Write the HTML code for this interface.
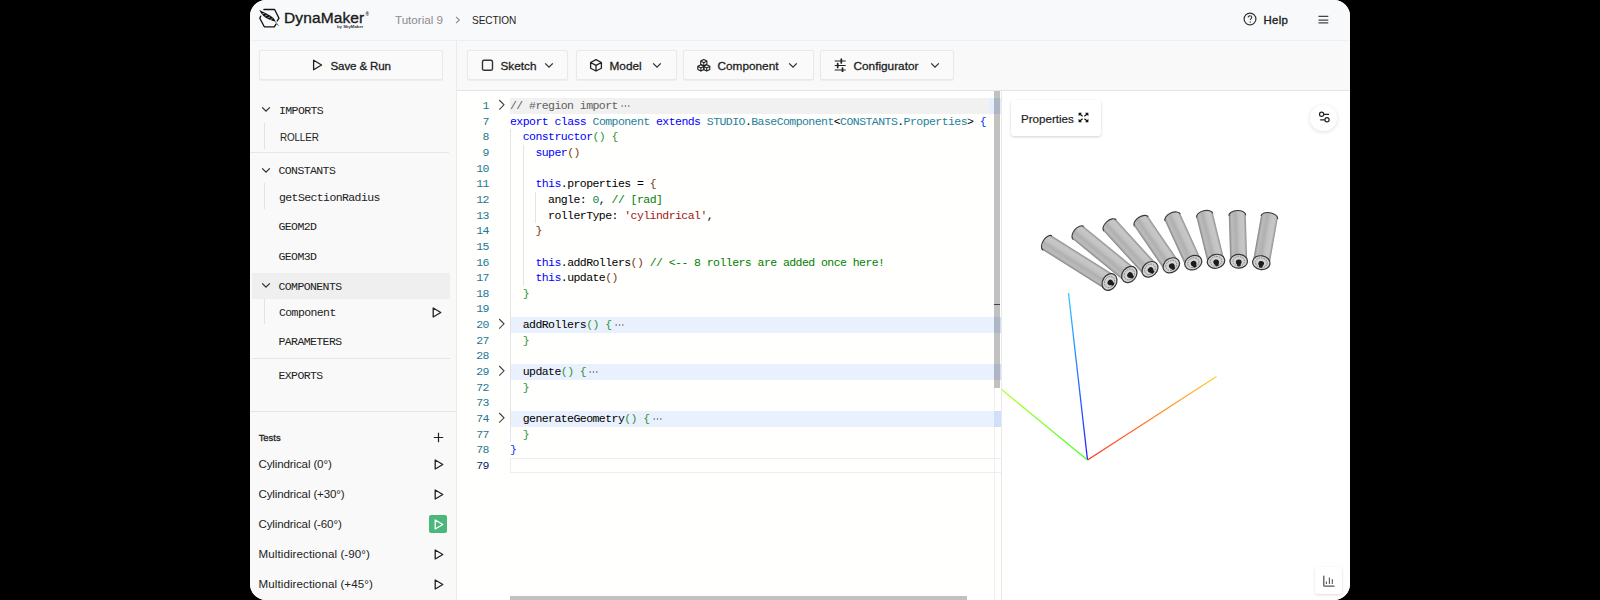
<!DOCTYPE html><html><head><meta charset="utf-8"><style>
*{margin:0;padding:0;box-sizing:border-box}
html,body{width:1600px;height:600px;overflow:hidden;background:#000}
body{position:relative;font-family:"Liberation Sans",sans-serif}
.win{position:absolute;left:250px;top:0;width:1100px;height:600px;border-radius:16px;overflow:hidden;background:#f9f9f9}
.a{position:absolute}
.hdr{left:0;top:0;width:1100px;height:41px;background:#f8f9fb;border-bottom:1px solid #eeeff0}
.side{left:0;top:41px;width:207px;height:559px;background:#f9f9f9;border-right:1px solid #ebebeb}
.tb{left:207px;top:41px;width:893px;height:50px;background:#f9f9f9;border-bottom:1px solid #e4e4e4}
.ed{left:207px;top:91px;width:544px;height:509px;background:#fffffe}
.vw{left:752px;top:91px;width:348px;height:509px;background:#fff}
.txt{white-space:pre;line-height:1}
.btn{background:#fafafa;border:1px solid #e9e9e9;border-radius:2px;box-shadow:0 1px 1px rgba(0,0,0,0.05)}
.mono{font-family:"Liberation Mono",monospace}
.code{font-family:"Liberation Mono",monospace;font-size:11.5px;letter-spacing:-0.555px;white-space:pre;line-height:15.65px;height:15.65px}
.ln{font-family:"Liberation Mono",monospace;font-size:11.5px;letter-spacing:-0.5px;white-space:pre;line-height:15.65px;color:#237893;text-align:right;width:40px}
.k{color:#0000ff}.t{color:#267f99}.c{color:#008000}.s{color:#a31515}.n{color:#098658}
.b1{color:#0431fa}.b2{color:#319331}.b3{color:#7b3814}
.d{color:#000}
.tree{font-family:"Liberation Mono",monospace;font-size:11.5px;letter-spacing:-0.6px;color:#222;white-space:pre;line-height:1}
.ui{font-family:"Liberation Sans",sans-serif;white-space:pre;line-height:1}
</style></head><body><div class="win"><div class="a hdr"></div>
<svg class="a" style="left:6px;top:6px" width="28" height="25" viewBox="256 6 28 25">
<path d="M263.9 9.5 H274.6 L279 18.2 L277.2 21" fill="none" stroke="#111" stroke-width="1.35" stroke-linejoin="round" stroke-linecap="round"/>
<path d="M260.7 16.2 L259.8 18.2 L264.3 26.8 H274.3 L276 24.2" fill="none" stroke="#111" stroke-width="1.35" stroke-linejoin="round" stroke-linecap="round"/>
<path d="M259.3 10 C261.5 11 266 13.2 270 15.6 C272.8 17.3 274.6 19 275.4 21.2 C273.2 21.4 270 20.2 267 18.6 C263.6 16.6 260.8 13.6 259.3 10 Z" fill="#111"/>
<path d="M262.2 14 L264.6 13.2 M264.8 16.2 L267.4 15 M267.6 18 L270.2 16.8 M270.4 19.6 L272.6 18.6" stroke="#f8f9fb" stroke-width="0.6"/>
<path d="M274.6 20.8 L278.6 25.8" stroke="#333" stroke-width="0.7"/>
</svg>
<div class="a ui" style="left:34px;top:10.4px;font-size:15.5px;color:#1a1a1a;letter-spacing:0.12px;-webkit-text-stroke:0.35px #1a1a1a">DynaMaker</div>
<div class="a ui" style="left:115.5px;top:13.2px;font-size:4.6px;color:#222;font-weight:bold">®</div>
<div class="a ui" style="left:87px;top:25px;font-size:4.3px;color:#333;font-weight:bold">by SkyMaker</div>
<div class="a ui" style="left:145px;top:13.8px;font-size:11.6px;color:#8c8c8c">Tutorial 9</div>
<svg class="a" style="left:205px;top:16px" width="6" height="8" viewBox="0 0 6 8"><path d="M1 0.8 L4.4 4 L1 7.2" fill="none" stroke="#8a8a8a" stroke-width="1.1"/></svg>
<div class="a ui" style="left:221.5px;top:13.8px;font-size:11.6px;color:#222;letter-spacing:-0.1px;transform:scaleX(0.87);transform-origin:0 0">SECTION</div>
<svg class="a" style="left:993px;top:12px" width="14" height="14" viewBox="0 0 14 14"><circle cx="7" cy="7" r="5.9" fill="none" stroke="#333" stroke-width="1.2"/><path d="M5.2 5.5 C5.2 4.4 6 3.8 7 3.8 C8 3.8 8.8 4.4 8.8 5.4 C8.8 6.5 7.2 6.8 7.2 8" fill="none" stroke="#333" stroke-width="1.1"/><circle cx="7.2" cy="10" r="0.7" fill="#333"/></svg>
<div class="a ui" style="left:1013.5px;top:14.6px;font-size:11.4px;color:#222;letter-spacing:0.3px;-webkit-text-stroke:0.35px #222">Help</div>
<svg class="a" style="left:1067.5px;top:14.5px" width="11" height="9" viewBox="0 0 11 9"><path d="M0.5 1.4 H10.3 M0.5 5 H10.3 M0.5 7.9 H10.3" stroke="#444" stroke-width="1.25"/></svg>
<div class="a side"></div>
<div class="a btn" style="left:9px;top:50px;width:184px;height:30px"></div>
<svg class="a" style="left:62px;top:59px" width="11" height="12" viewBox="0 0 11 12"><path d="M1.6 1.2 L9.6 6 L1.6 10.8 Z" fill="none" stroke="#222" stroke-width="1.3" stroke-linejoin="round"/></svg>
<div class="a ui" style="left:80.5px;top:59.5px;font-size:11.6px;color:#1e1e1e;-webkit-text-stroke:0.3px #1e1e1e;letter-spacing:-0.15px">Save &amp; Run</div>
<svg class="a" style="left:10.5px;top:106px" width="10" height="7" viewBox="0 0 10 7"><path d="M1.2 1.4 L5 5.2 L8.8 1.4" fill="none" stroke="#333" stroke-width="1.3"/></svg>
<div class="a tree" style="left:29px;top:104.80px;">IMPORTS</div>
<div class="a" style="left:14px;top:123px;width:1px;height:26px;background:#e3e3e3"></div>
<div class="a ui" style="left:29.5px;top:132px;font-size:11.4px;color:#222;letter-spacing:-0.2px;transform:scaleX(0.87);transform-origin:0 0">ROLLER</div>
<div class="a" style="left:0px;top:152px;width:199px;height:1px;background:#e6e6e6"></div>
<svg class="a" style="left:10.5px;top:166.5px" width="10" height="7" viewBox="0 0 10 7"><path d="M1.2 1.4 L5 5.2 L8.8 1.4" fill="none" stroke="#333" stroke-width="1.3"/></svg>
<div class="a tree" style="left:28.5px;top:165.30px;">CONSTANTS</div>
<div class="a" style="left:14px;top:183px;width:1px;height:26px;background:#e3e3e3"></div>
<div class="a tree" style="left:29px;top:192.10px;">getSectionRadius</div>
<div class="a tree" style="left:28.5px;top:221.30px;">GEOM2D</div>
<div class="a tree" style="left:28.5px;top:250.80px;">GEOM3D</div>
<div class="a" style="left:2px;top:272.5px;width:198px;height:26px;background:#efefef"></div>
<svg class="a" style="left:10.5px;top:282px" width="10" height="7" viewBox="0 0 10 7"><path d="M1.2 1.4 L5 5.2 L8.8 1.4" fill="none" stroke="#333" stroke-width="1.3"/></svg>
<div class="a tree" style="left:28.5px;top:280.60px;">COMPONENTS</div>
<div class="a" style="left:14px;top:299px;width:1px;height:25px;background:#e3e3e3"></div>
<div class="a tree" style="left:29px;top:306.80px;">Component</div>
<svg class="a" style="left:181.5px;top:307px" width="10" height="11" viewBox="0 0 10 11"><path d="M1.2 1 L8.8 5.5 L1.2 10 Z" fill="none" stroke="#222" stroke-width="1.3" stroke-linejoin="round"/></svg>
<div class="a tree" style="left:28.5px;top:336.30px;">PARAMETERS</div>
<div class="a" style="left:2px;top:358px;width:198px;height:1px;background:#e6e6e6"></div>
<div class="a tree" style="left:28.5px;top:370.10px;">EXPORTS</div>
<div class="a" style="left:0px;top:411px;width:206px;height:1px;background:#e6e6e6"></div>
<div class="a ui" style="left:8.699999999999989px;top:432.5px;font-size:9.4px;color:#1e1e1e;-webkit-text-stroke:0.3px #1e1e1e">Tests</div>
<svg class="a" style="left:183px;top:432px" width="11" height="11" viewBox="0 0 11 11"><path d="M5.5 0.8 V10.2 M0.8 5.5 H10.2" stroke="#222" stroke-width="1.2"/></svg>
<div class="a ui" style="left:8.5px;top:458.47px;font-size:11.6px;color:#222;letter-spacing:-0.15px">Cylindrical (0°)</div>
<svg class="a" style="left:183.5px;top:459px" width="10" height="11" viewBox="0 0 10 11"><path d="M1.2 1 L8.8 5.5 L1.2 10 Z" fill="none" stroke="#222" stroke-width="1.3" stroke-linejoin="round"/></svg>
<div class="a ui" style="left:8.5px;top:488.47px;font-size:11.6px;color:#222;letter-spacing:-0.15px">Cylindrical (+30°)</div>
<svg class="a" style="left:183.5px;top:489px" width="10" height="11" viewBox="0 0 10 11"><path d="M1.2 1 L8.8 5.5 L1.2 10 Z" fill="none" stroke="#222" stroke-width="1.3" stroke-linejoin="round"/></svg>
<div class="a ui" style="left:8.5px;top:518.47px;font-size:11.6px;color:#222;letter-spacing:-0.15px">Cylindrical (-60°)</div>
<div class="a" style="left:178.5px;top:514.5px;width:18.5px;height:18px;background:#4cb77a;border-radius:2px"></div>
<svg class="a" style="left:184px;top:518.5px" width="10" height="11" viewBox="0 0 10 11"><path d="M1.2 1 L8.8 5.5 L1.2 10 Z" fill="none" stroke="#fff" stroke-width="1.3" stroke-linejoin="round"/></svg>
<div class="a ui" style="left:8.5px;top:548.47px;font-size:11.6px;color:#222;letter-spacing:0.08px">Multidirectional (-90°)</div>
<svg class="a" style="left:183.5px;top:549px" width="10" height="11" viewBox="0 0 10 11"><path d="M1.2 1 L8.8 5.5 L1.2 10 Z" fill="none" stroke="#222" stroke-width="1.3" stroke-linejoin="round"/></svg>
<div class="a ui" style="left:8.5px;top:578.47px;font-size:11.6px;color:#222;letter-spacing:0.08px">Multidirectional (+45°)</div>
<svg class="a" style="left:183.5px;top:579px" width="10" height="11" viewBox="0 0 10 11"><path d="M1.2 1 L8.8 5.5 L1.2 10 Z" fill="none" stroke="#222" stroke-width="1.3" stroke-linejoin="round"/></svg>
<div class="a tb"></div>
<div class="a btn" style="left:217px;top:50px;width:101px;height:30px"></div><div class="a" style="left:231.3px;top:57.5px;line-height:0"><svg width="14" height="14" viewBox="0 0 14 14"><rect x="1.5" y="2.3" width="10" height="10" rx="1.6" fill="none" stroke="#333" stroke-width="1.4"/></svg></div><div class="a ui" style="left:250.5px;top:61px;font-size:11.8px;color:#1e1e1e;-webkit-text-stroke:0.3px #1e1e1e;letter-spacing:0px">Sketch</div><svg class="a" style="left:294px;top:61.5px" width="10" height="7" viewBox="0 0 10 7"><path d="M1.2 1.4 L5 5.2 L8.8 1.4" fill="none" stroke="#333" stroke-width="1.3"/></svg>
<div class="a btn" style="left:326px;top:50px;width:100.5px;height:30px"></div><div class="a" style="left:339px;top:57.5px;line-height:0"><svg width="14" height="14" viewBox="589 57.5 14 14"><path d="M596 59.14999999999999 L601.4 61.99999999999999 V67.69999999999999 L596 70.55 L590.6 67.69999999999999 V61.99999999999999 Z M590.6 61.99999999999999 L596 64.85 L601.4 61.99999999999999 M596 64.85 V70.55" fill="none" stroke="#222" stroke-width="1.3" stroke-linejoin="round"/></svg></div><div class="a ui" style="left:359.5px;top:61px;font-size:11.8px;color:#1e1e1e;-webkit-text-stroke:0.3px #1e1e1e;letter-spacing:0px">Model</div><svg class="a" style="left:402px;top:61.5px" width="10" height="7" viewBox="0 0 10 7"><path d="M1.2 1.4 L5 5.2 L8.8 1.4" fill="none" stroke="#333" stroke-width="1.3"/></svg>
<div class="a btn" style="left:433px;top:50px;width:130.5px;height:30px"></div><div class="a" style="left:447px;top:57.5px;line-height:0"><svg width="14" height="14" viewBox="697 57.5 14 14"><path d="M703.8 59.0 L706.9 60.6 V63.800000000000004 L703.8 65.4 L700.6999999999999 63.800000000000004 V60.6 Z M700.6999999999999 60.6 L703.8 62.2 L706.9 60.6 M703.8 62.2 V65.4" fill="none" stroke="#222" stroke-width="1.1" stroke-linejoin="round"/><path d="M700.9 64.2 L704.0 65.80000000000001 V69.0 L700.9 70.60000000000001 L697.8 69.0 V65.80000000000001 Z M697.8 65.80000000000001 L700.9 67.4 L704.0 65.80000000000001 M700.9 67.4 V70.60000000000001" fill="none" stroke="#222" stroke-width="1.1" stroke-linejoin="round"/><path d="M706.7 64.2 L709.8000000000001 65.80000000000001 V69.0 L706.7 70.60000000000001 L703.6 69.0 V65.80000000000001 Z M703.6 65.80000000000001 L706.7 67.4 L709.8000000000001 65.80000000000001 M706.7 67.4 V70.60000000000001" fill="none" stroke="#222" stroke-width="1.1" stroke-linejoin="round"/></svg></div><div class="a ui" style="left:467.5px;top:61px;font-size:11.8px;color:#1e1e1e;-webkit-text-stroke:0.3px #1e1e1e;letter-spacing:0px">Component</div><svg class="a" style="left:538px;top:61.5px" width="10" height="7" viewBox="0 0 10 7"><path d="M1.2 1.4 L5 5.2 L8.8 1.4" fill="none" stroke="#333" stroke-width="1.3"/></svg>
<div class="a btn" style="left:570px;top:50px;width:134px;height:30px"></div><div class="a" style="left:583px;top:57.5px;line-height:0"><svg width="14" height="14" viewBox="833 57.5 14 14"><path d="M834.7 60.5 H845.7 M834.7 65 H845.7 M834.7 69.5 H845.7" stroke="#222" stroke-width="1.1"/><path d="M841.3 58.6 V62.4 M837.7 63.1 V66.9 M842.5 67.6 V71.4" stroke="#222" stroke-width="1.7" stroke-linecap="round"/></svg></div><div class="a ui" style="left:603.5px;top:61px;font-size:11.8px;color:#1e1e1e;-webkit-text-stroke:0.3px #1e1e1e;letter-spacing:0px">Configurator</div><svg class="a" style="left:679.5px;top:61.5px" width="10" height="7" viewBox="0 0 10 7"><path d="M1.2 1.4 L5 5.2 L8.8 1.4" fill="none" stroke="#333" stroke-width="1.3"/></svg>
<div class="a ed"></div>
<div class="a" style="left:260px;top:98.00px;width:484px;height:15.65px;background:#f1f1f1"></div>
<div class="a" style="left:260px;top:317.10px;width:491px;height:15.65px;background:#e8f1fd"></div>
<div class="a" style="left:260px;top:364.05px;width:491px;height:15.65px;background:#e8f1fd"></div>
<div class="a" style="left:260px;top:411.00px;width:491px;height:15.65px;background:#e8f1fd"></div>
<div class="a" style="left:260px;top:458.45px;width:491px;height:14.65px;border:1px solid #eeeeee;border-right:none"></div>
<div class="a" style="left:260px;top:129.30px;width:1px;height:313.00px;background:#e4e4e4"></div>
<div class="a" style="left:272.5px;top:144.95px;width:1px;height:140.85px;background:#e4e4e4"></div>
<div class="a" style="left:285px;top:191.90px;width:1px;height:31.30px;background:#e4e4e4"></div>
<div class="a ln" style="left:199px;top:98.00px;color:#237893">1</div>
<svg class="a" style="left:248px;top:99.20px" width="8" height="12" viewBox="0 0 8 12"><path d="M1.2 1 L6 5.8 L1.2 10.6" fill="none" stroke="#424242" stroke-width="1.1"/></svg>
<svg class="a" style="left:366.87px;top:98.00px" width="16" height="15" viewBox="0 0 16 15"><circle cx="5.20" cy="8.10" r="0.75" fill="#555"/><circle cx="8.50" cy="8.10" r="0.75" fill="#555"/><circle cx="11.80" cy="8.10" r="0.75" fill="#555"/></svg>
<div class="a code" style="left:260px;top:98.00px;color:#000"><span style="color:#5f5f5f">// #region import</span></div>
<div class="a ln" style="left:199px;top:113.65px;color:#237893">7</div>
<div class="a code" style="left:260px;top:113.65px;color:#000"><span class="k">export</span> <span class="k">class</span> <span class="t">Component</span> <span class="k">extends</span> <span class="t">STUDIO</span>.<span class="t">BaseComponent</span>&lt;<span class="t">CONSTANTS</span>.<span class="t">Properties</span>&gt; <span class="b1">{</span></div>
<div class="a ln" style="left:199px;top:129.30px;color:#237893">8</div>
<div class="a code" style="left:260px;top:129.30px;color:#000">  <span class="k">constructor</span><span class="b2">()</span> <span class="b2">{</span></div>
<div class="a ln" style="left:199px;top:144.95px;color:#237893">9</div>
<div class="a code" style="left:260px;top:144.95px;color:#000">    <span class="k">super</span><span class="b3">()</span></div>
<div class="a ln" style="left:199px;top:160.60px;color:#237893">10</div>
<div class="a ln" style="left:199px;top:176.25px;color:#237893">11</div>
<div class="a code" style="left:260px;top:176.25px;color:#000">    <span class="k">this</span>.properties = <span class="b3">{</span></div>
<div class="a ln" style="left:199px;top:191.90px;color:#237893">12</div>
<div class="a code" style="left:260px;top:191.90px;color:#000">      angle: <span class="n">0</span>, <span class="c">// [rad]</span></div>
<div class="a ln" style="left:199px;top:207.55px;color:#237893">13</div>
<div class="a code" style="left:260px;top:207.55px;color:#000">      rollerType: <span class="s">'cylindrical'</span>,</div>
<div class="a ln" style="left:199px;top:223.20px;color:#237893">14</div>
<div class="a code" style="left:260px;top:223.20px;color:#000">    <span class="b3">}</span></div>
<div class="a ln" style="left:199px;top:238.85px;color:#237893">15</div>
<div class="a ln" style="left:199px;top:254.50px;color:#237893">16</div>
<div class="a code" style="left:260px;top:254.50px;color:#000">    <span class="k">this</span>.addRollers<span class="b3">()</span> <span class="c">// &lt;-- 8 rollers are added once here!</span></div>
<div class="a ln" style="left:199px;top:270.15px;color:#237893">17</div>
<div class="a code" style="left:260px;top:270.15px;color:#000">    <span class="k">this</span>.update<span class="b3">()</span></div>
<div class="a ln" style="left:199px;top:285.80px;color:#237893">18</div>
<div class="a code" style="left:260px;top:285.80px;color:#000">  <span class="b2">}</span></div>
<div class="a ln" style="left:199px;top:301.45px;color:#237893">19</div>
<div class="a ln" style="left:199px;top:317.10px;color:#237893">20</div>
<svg class="a" style="left:248px;top:318.30px" width="8" height="12" viewBox="0 0 8 12"><path d="M1.2 1 L6 5.8 L1.2 10.6" fill="none" stroke="#424242" stroke-width="1.1"/></svg>
<svg class="a" style="left:360.52px;top:317.10px" width="16" height="15" viewBox="0 0 16 15"><circle cx="5.20" cy="8.10" r="0.75" fill="#555"/><circle cx="8.50" cy="8.10" r="0.75" fill="#555"/><circle cx="11.80" cy="8.10" r="0.75" fill="#555"/></svg>
<div class="a code" style="left:260px;top:317.10px;color:#000">  addRollers<span class="b2">()</span> <span class="b2">{</span></div>
<div class="a ln" style="left:199px;top:332.75px;color:#237893">27</div>
<div class="a code" style="left:260px;top:332.75px;color:#000">  <span class="b2">}</span></div>
<div class="a ln" style="left:199px;top:348.40px;color:#237893">28</div>
<div class="a ln" style="left:199px;top:364.05px;color:#237893">29</div>
<svg class="a" style="left:248px;top:365.25px" width="8" height="12" viewBox="0 0 8 12"><path d="M1.2 1 L6 5.8 L1.2 10.6" fill="none" stroke="#424242" stroke-width="1.1"/></svg>
<svg class="a" style="left:335.14px;top:364.05px" width="16" height="15" viewBox="0 0 16 15"><circle cx="5.20" cy="8.10" r="0.75" fill="#555"/><circle cx="8.50" cy="8.10" r="0.75" fill="#555"/><circle cx="11.80" cy="8.10" r="0.75" fill="#555"/></svg>
<div class="a code" style="left:260px;top:364.05px;color:#000">  update<span class="b2">()</span> <span class="b2">{</span></div>
<div class="a ln" style="left:199px;top:379.70px;color:#237893">72</div>
<div class="a code" style="left:260px;top:379.70px;color:#000">  <span class="b2">}</span></div>
<div class="a ln" style="left:199px;top:395.35px;color:#237893">73</div>
<div class="a ln" style="left:199px;top:411.00px;color:#237893">74</div>
<svg class="a" style="left:248px;top:412.20px" width="8" height="12" viewBox="0 0 8 12"><path d="M1.2 1 L6 5.8 L1.2 10.6" fill="none" stroke="#424242" stroke-width="1.1"/></svg>
<svg class="a" style="left:398.59px;top:411.00px" width="16" height="15" viewBox="0 0 16 15"><circle cx="5.20" cy="8.10" r="0.75" fill="#555"/><circle cx="8.50" cy="8.10" r="0.75" fill="#555"/><circle cx="11.80" cy="8.10" r="0.75" fill="#555"/></svg>
<div class="a code" style="left:260px;top:411.00px;color:#000">  generateGeometry<span class="b2">()</span> <span class="b2">{</span></div>
<div class="a ln" style="left:199px;top:426.65px;color:#237893">77</div>
<div class="a code" style="left:260px;top:426.65px;color:#000">  <span class="b2">}</span></div>
<div class="a ln" style="left:199px;top:442.30px;color:#237893">78</div>
<div class="a code" style="left:260px;top:442.30px;color:#000"><span class="b1">}</span></div>
<div class="a ln" style="left:199px;top:457.95px;color:#0b216f">79</div>
<div class="a" style="left:744px;top:91px;width:1px;height:509px;background:#f0f0f0"></div>
<div class="a" style="left:744px;top:91px;width:6px;height:297px;background:#c1c1c1"></div>
<div class="a" style="left:744px;top:303.5px;width:6px;height:1.4px;background:#444"></div>
<div class="a" style="left:739px;top:98.00px;width:5px;height:15.65px;background:#e5f0fd"></div>
<div class="a" style="left:744px;top:98.00px;width:7px;height:15.65px;background:rgba(40,110,230,0.12)"></div>
<div class="a" style="left:744px;top:317.10px;width:7px;height:15.65px;background:rgba(40,110,230,0.12)"></div>
<div class="a" style="left:744px;top:364.05px;width:7px;height:15.65px;background:rgba(40,110,230,0.12)"></div>
<div class="a" style="left:744px;top:411.00px;width:7px;height:15.65px;background:rgba(40,110,230,0.12)"></div>
<div class="a" style="left:751px;top:91px;width:1px;height:509px;background:#e9e9e9"></div>
<div class="a" style="left:260px;top:596px;width:457px;height:4px;background:#c1c1c1"></div>
<div class="a vw"></div>
<div class="a" style="left:760.5px;top:99.5px;width:90.5px;height:36.5px;background:#fff;border-radius:3px;box-shadow:0 1px 3px rgba(0,0,0,0.18)"></div>
<div class="a ui" style="left:771px;top:112.8px;font-size:11.6px;color:#222;letter-spacing:0px;-webkit-text-stroke:0.2px #222">Properties</div>
<svg class="a" style="left:827px;top:111px" width="13" height="13" viewBox="0 0 13 13"><g fill="#111"><path d="M1.6 1.8 L5 1.8 L1.6 5.2 Z"/><path d="M11.4 1.8 L8 1.8 L11.4 5.2 Z"/><path d="M1.6 11.2 L5 11.2 L1.6 7.8 Z"/><path d="M11.4 11.2 L8 11.2 L11.4 7.8 Z"/></g><path d="M2.5 2.7 L5.6 5.3 M10.5 2.7 L7.4 5.3 M2.5 10.3 L5.6 7.7 M10.5 10.3 L7.4 7.7" stroke="#111" stroke-width="1.2"/></svg>
<div class="a" style="left:1060.3px;top:104.7px;width:26.8px;height:26.8px;background:#fff;border-radius:50%;box-shadow:0 1px 4px rgba(0,0,0,0.13)"></div>
<svg class="a" style="left:1066px;top:110px" width="16" height="14" viewBox="1316 110 16 14"><path d="M1323.8 114.3 H1329 M1320.2 119.8 H1324.8" stroke="#222" stroke-width="1.2"/><circle cx="1321.6" cy="114.3" r="2.1" fill="#fff" stroke="#222" stroke-width="1.2"/><circle cx="1327" cy="119.8" r="2.1" fill="#fff" stroke="#222" stroke-width="1.2"/></svg>
<div class="a" style="left:1065.4px;top:567.4px;width:27px;height:26.7px;background:#fff;border-radius:3px;box-shadow:0 1px 3px rgba(0,0,0,0.14)"></div>
<svg class="a" style="left:1070px;top:573px" width="18" height="16" viewBox="1320 573 18 16"><path d="M1323.8 576.2 V585.4 Q1323.8 586.2 1324.6 586.2 H1334" fill="none" stroke="#555" stroke-width="1.3" stroke-linecap="round"/><path d="M1326.4 581.6 V584 M1329.4 577.4 V584 M1332.3 579.2 V584" stroke="#555" stroke-width="1.1"/></svg>
<svg class="a" style="left:752px;top:91px" width="348" height="509" viewBox="1002 91 348 509">
<defs>
<linearGradient id="gb" x1="1087.5" y1="460" x2="1068.5" y2="293" gradientUnits="userSpaceOnUse"><stop offset="0" stop-color="#2020ff"/><stop offset="1" stop-color="#30c8ff"/></linearGradient>
<linearGradient id="gg" x1="1087.5" y1="460" x2="1001" y2="389" gradientUnits="userSpaceOnUse"><stop offset="0" stop-color="#40ff30"/><stop offset="1" stop-color="#c0ff30"/></linearGradient>
<linearGradient id="go" x1="1087.5" y1="460" x2="1216.5" y2="376.5" gradientUnits="userSpaceOnUse"><stop offset="0" stop-color="#ff3020"/><stop offset="1" stop-color="#ffd030"/></linearGradient>
</defs>
<path d="M1087.5 460 L1068.5 293" stroke="url(#gb)" stroke-width="1.3"/>
<path d="M1087.5 460 L1001 389" stroke="url(#gg)" stroke-width="1.3"/>
<path d="M1087.5 460 L1216.5 376.5" stroke="url(#go)" stroke-width="1.3"/>
</svg>
<svg class="a" style="left:752px;top:91px" width="348" height="509" viewBox="1002 91 348 509"><g id="rollers"><defs><linearGradient id="rg1047" gradientUnits="userSpaceOnUse" x1="1052.03" y1="235.81" x2="1042.97" y2="250.19"><stop offset="0" stop-color="#8e8e8e"/><stop offset="0.15" stop-color="#c8c8c8"/><stop offset="0.4" stop-color="#c2c2c2"/><stop offset="0.6" stop-color="#b0b0b0"/><stop offset="0.85" stop-color="#bcbcbc"/><stop offset="1" stop-color="#848484"/></linearGradient></defs><path d="M1052.03 235.81 A4.93 8.50 32.2 0 0 1042.97 250.19 L1104.97 289.19 L1114.03 274.81 Z" fill="url(#rg1047)"/><path d="M1052.03 235.81 A4.93 8.50 32.2 0 0 1042.97 250.19" fill="none" stroke="#3a3a3a" stroke-width="1.1"/><ellipse cx="1109.50" cy="282.00" rx="6.89" ry="8.80" transform="rotate(32.2 1109.50 282.00)" fill="#d2d2d2" stroke="#363636" stroke-width="1.2"/><ellipse cx="1109.50" cy="282.00" rx="4.74" ry="5.78" transform="rotate(32.2 1109.50 282.00)" fill="none" stroke="#6a6a6a" stroke-width="0.7" stroke-dasharray="1.6 0.9"/><ellipse cx="1110.18" cy="282.43" rx="2.55" ry="2.89" transform="rotate(32.2 1110.18 282.43)" fill="#1c1c1c"/><path d="M1110.18 282.43 L1112.21 283.70" stroke="#1c1c1c" stroke-width="3.83" stroke-linecap="round"/><defs><linearGradient id="rg1078" gradientUnits="userSpaceOnUse" x1="1083.88" y1="226.42" x2="1073.12" y2="239.58"><stop offset="0" stop-color="#8e8e8e"/><stop offset="0.15" stop-color="#c8c8c8"/><stop offset="0.4" stop-color="#c2c2c2"/><stop offset="0.6" stop-color="#b0b0b0"/><stop offset="0.85" stop-color="#bcbcbc"/><stop offset="1" stop-color="#848484"/></linearGradient></defs><path d="M1083.88 226.42 A4.93 8.50 39.2 0 0 1073.12 239.58 L1123.92 281.08 L1134.68 267.92 Z" fill="url(#rg1078)"/><path d="M1083.88 226.42 A4.93 8.50 39.2 0 0 1073.12 239.58" fill="none" stroke="#3a3a3a" stroke-width="1.1"/><ellipse cx="1129.30" cy="274.50" rx="6.89" ry="8.80" transform="rotate(39.2 1129.30 274.50)" fill="#d2d2d2" stroke="#363636" stroke-width="1.2"/><ellipse cx="1129.30" cy="274.50" rx="4.74" ry="5.78" transform="rotate(39.2 1129.30 274.50)" fill="none" stroke="#6a6a6a" stroke-width="0.7" stroke-dasharray="1.6 0.9"/><ellipse cx="1129.92" cy="275.01" rx="2.55" ry="2.89" transform="rotate(39.2 1129.92 275.01)" fill="#1c1c1c"/><path d="M1129.92 275.01 L1131.78 276.52" stroke="#1c1c1c" stroke-width="3.83" stroke-linecap="round"/><defs><linearGradient id="rg1110" gradientUnits="userSpaceOnUse" x1="1116.28" y1="219.77" x2="1103.72" y2="231.23"><stop offset="0" stop-color="#8e8e8e"/><stop offset="0.15" stop-color="#c8c8c8"/><stop offset="0.4" stop-color="#c2c2c2"/><stop offset="0.6" stop-color="#b0b0b0"/><stop offset="0.85" stop-color="#bcbcbc"/><stop offset="1" stop-color="#848484"/></linearGradient></defs><path d="M1116.28 219.77 A4.93 8.50 47.6 0 0 1103.72 231.23 L1143.72 275.03 L1156.28 263.57 Z" fill="url(#rg1110)"/><path d="M1116.28 219.77 A4.93 8.50 47.6 0 0 1103.72 231.23" fill="none" stroke="#3a3a3a" stroke-width="1.1"/><ellipse cx="1150.00" cy="269.30" rx="6.89" ry="8.80" transform="rotate(47.6 1150.00 269.30)" fill="#d2d2d2" stroke="#363636" stroke-width="1.2"/><ellipse cx="1150.00" cy="269.30" rx="4.74" ry="5.78" transform="rotate(47.6 1150.00 269.30)" fill="none" stroke="#6a6a6a" stroke-width="0.7" stroke-dasharray="1.6 0.9"/><ellipse cx="1150.54" cy="269.89" rx="2.55" ry="2.89" transform="rotate(47.6 1150.54 269.89)" fill="#1c1c1c"/><path d="M1150.54 269.89 L1152.16 271.66" stroke="#1c1c1c" stroke-width="3.83" stroke-linecap="round"/><defs><linearGradient id="rg1141" gradientUnits="userSpaceOnUse" x1="1148.31" y1="216.70" x2="1134.29" y2="226.30"><stop offset="0" stop-color="#8e8e8e"/><stop offset="0.15" stop-color="#c8c8c8"/><stop offset="0.4" stop-color="#c2c2c2"/><stop offset="0.6" stop-color="#b0b0b0"/><stop offset="0.85" stop-color="#bcbcbc"/><stop offset="1" stop-color="#848484"/></linearGradient></defs><path d="M1148.31 216.70 A4.93 8.50 55.6 0 0 1134.29 226.30 L1164.29 270.10 L1178.31 260.50 Z" fill="url(#rg1141)"/><path d="M1148.31 216.70 A4.93 8.50 55.6 0 0 1134.29 226.30" fill="none" stroke="#3a3a3a" stroke-width="1.1"/><ellipse cx="1171.30" cy="265.30" rx="6.89" ry="8.80" transform="rotate(55.6 1171.30 265.30)" fill="#d2d2d2" stroke="#363636" stroke-width="1.2"/><ellipse cx="1171.30" cy="265.30" rx="4.74" ry="5.78" transform="rotate(55.6 1171.30 265.30)" fill="none" stroke="#6a6a6a" stroke-width="0.7" stroke-dasharray="1.6 0.9"/><ellipse cx="1171.75" cy="265.96" rx="2.55" ry="2.89" transform="rotate(55.6 1171.75 265.96)" fill="#1c1c1c"/><path d="M1171.75 265.96 L1173.11 267.94" stroke="#1c1c1c" stroke-width="3.83" stroke-linecap="round"/><defs><linearGradient id="rg1172" gradientUnits="userSpaceOnUse" x1="1180.43" y1="213.97" x2="1164.97" y2="221.03"><stop offset="0" stop-color="#8e8e8e"/><stop offset="0.15" stop-color="#c8c8c8"/><stop offset="0.4" stop-color="#c2c2c2"/><stop offset="0.6" stop-color="#b0b0b0"/><stop offset="0.85" stop-color="#bcbcbc"/><stop offset="1" stop-color="#848484"/></linearGradient></defs><path d="M1180.43 213.97 A4.93 8.50 65.5 0 0 1164.97 221.03 L1185.57 266.23 L1201.03 259.17 Z" fill="url(#rg1172)"/><path d="M1180.43 213.97 A4.93 8.50 65.5 0 0 1164.97 221.03" fill="none" stroke="#3a3a3a" stroke-width="1.1"/><ellipse cx="1193.30" cy="262.70" rx="6.89" ry="8.80" transform="rotate(65.5 1193.30 262.70)" fill="#d2d2d2" stroke="#363636" stroke-width="1.2"/><ellipse cx="1193.30" cy="262.70" rx="4.74" ry="5.78" transform="rotate(65.5 1193.30 262.70)" fill="none" stroke="#6a6a6a" stroke-width="0.7" stroke-dasharray="1.6 0.9"/><ellipse cx="1193.63" cy="263.43" rx="2.55" ry="2.89" transform="rotate(65.5 1193.63 263.43)" fill="#1c1c1c"/><path d="M1193.63 263.43 L1194.63 265.61" stroke="#1c1c1c" stroke-width="3.83" stroke-linecap="round"/><defs><linearGradient id="rg1204" gradientUnits="userSpaceOnUse" x1="1212.95" y1="213.46" x2="1196.45" y2="217.54"><stop offset="0" stop-color="#8e8e8e"/><stop offset="0.15" stop-color="#c8c8c8"/><stop offset="0.4" stop-color="#c2c2c2"/><stop offset="0.6" stop-color="#b0b0b0"/><stop offset="0.85" stop-color="#bcbcbc"/><stop offset="1" stop-color="#848484"/></linearGradient></defs><path d="M1212.95 213.46 A4.93 8.50 76.1 0 0 1196.45 217.54 L1207.75 263.34 L1224.25 259.26 Z" fill="url(#rg1204)"/><path d="M1212.95 213.46 A4.93 8.50 76.1 0 0 1196.45 217.54" fill="none" stroke="#3a3a3a" stroke-width="1.1"/><ellipse cx="1216.00" cy="261.30" rx="6.89" ry="8.80" transform="rotate(76.1 1216.00 261.30)" fill="#d2d2d2" stroke="#363636" stroke-width="1.2"/><ellipse cx="1216.00" cy="261.30" rx="4.74" ry="5.78" transform="rotate(76.1 1216.00 261.30)" fill="none" stroke="#6a6a6a" stroke-width="0.7" stroke-dasharray="1.6 0.9"/><ellipse cx="1216.19" cy="262.08" rx="2.55" ry="2.89" transform="rotate(76.1 1216.19 262.08)" fill="#1c1c1c"/><path d="M1216.19 262.08 L1216.77 264.41" stroke="#1c1c1c" stroke-width="3.83" stroke-linecap="round"/><defs><linearGradient id="rg1237" gradientUnits="userSpaceOnUse" x1="1245.80" y1="215.24" x2="1228.80" y2="215.76"><stop offset="0" stop-color="#8e8e8e"/><stop offset="0.15" stop-color="#c8c8c8"/><stop offset="0.4" stop-color="#c2c2c2"/><stop offset="0.6" stop-color="#b0b0b0"/><stop offset="0.85" stop-color="#bcbcbc"/><stop offset="1" stop-color="#848484"/></linearGradient></defs><path d="M1245.80 215.24 A4.93 8.50 88.2 0 0 1228.80 215.76 L1230.20 261.56 L1247.20 261.04 Z" fill="url(#rg1237)"/><path d="M1245.80 215.24 A4.93 8.50 88.2 0 0 1228.80 215.76" fill="none" stroke="#3a3a3a" stroke-width="1.1"/><ellipse cx="1238.70" cy="261.30" rx="6.89" ry="8.80" transform="rotate(88.2 1238.70 261.30)" fill="#d2d2d2" stroke="#363636" stroke-width="1.2"/><ellipse cx="1238.70" cy="261.30" rx="4.74" ry="5.78" transform="rotate(88.2 1238.70 261.30)" fill="none" stroke="#6a6a6a" stroke-width="0.7" stroke-dasharray="1.6 0.9"/><ellipse cx="1238.72" cy="262.10" rx="2.55" ry="2.89" transform="rotate(88.2 1238.72 262.10)" fill="#1c1c1c"/><path d="M1238.72 262.10 L1238.80 264.50" stroke="#1c1c1c" stroke-width="3.83" stroke-linecap="round"/><defs><linearGradient id="rg1269" gradientUnits="userSpaceOnUse" x1="1277.67" y1="218.98" x2="1260.93" y2="216.02"><stop offset="0" stop-color="#8e8e8e"/><stop offset="0.15" stop-color="#c8c8c8"/><stop offset="0.4" stop-color="#c2c2c2"/><stop offset="0.6" stop-color="#b0b0b0"/><stop offset="0.85" stop-color="#bcbcbc"/><stop offset="1" stop-color="#848484"/></linearGradient></defs><path d="M1277.67 218.98 A4.93 8.50 100.0 0 0 1260.93 216.02 L1252.93 261.22 L1269.67 264.18 Z" fill="url(#rg1269)"/><path d="M1277.67 218.98 A4.93 8.50 100.0 0 0 1260.93 216.02" fill="none" stroke="#3a3a3a" stroke-width="1.1"/><ellipse cx="1261.30" cy="262.70" rx="6.89" ry="8.80" transform="rotate(100.0 1261.30 262.70)" fill="#d2d2d2" stroke="#363636" stroke-width="1.2"/><ellipse cx="1261.30" cy="262.70" rx="4.74" ry="5.78" transform="rotate(100.0 1261.30 262.70)" fill="none" stroke="#6a6a6a" stroke-width="0.7" stroke-dasharray="1.6 0.9"/><ellipse cx="1261.16" cy="263.49" rx="2.55" ry="2.89" transform="rotate(100.0 1261.16 263.49)" fill="#1c1c1c"/><path d="M1261.16 263.49 L1260.74 265.85" stroke="#1c1c1c" stroke-width="3.83" stroke-linecap="round"/></g></svg></div></body></html>
